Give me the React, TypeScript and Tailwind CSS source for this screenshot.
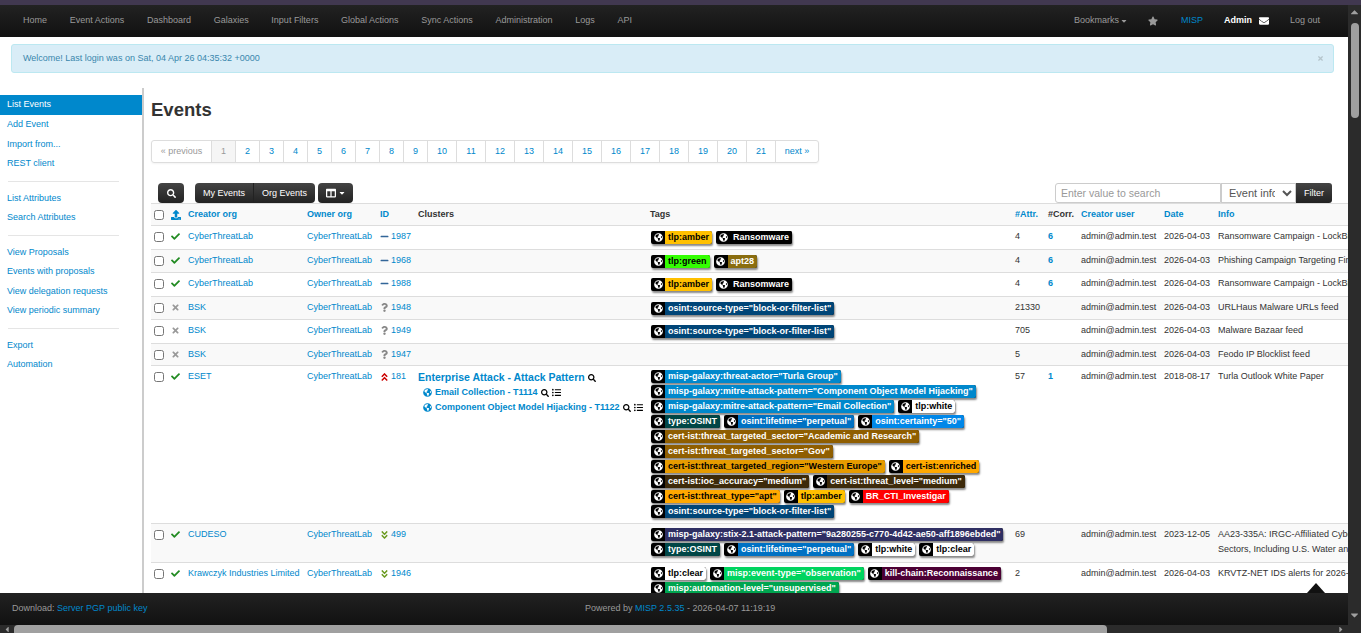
import {
  FaAngleDoubleDown,
  FaAngleDoubleUp,
  FaCheck,
  FaColumns,
  FaEnvelope,
  FaGlobeAmericas,
  FaListUl,
  FaMinus,
  FaQuestion,
  FaSearch,
  FaStar,
  FaTimes,
  FaUpload,
  FaCaretDown,
  FaCaretUp,
  FaCaretLeft,
  FaCaretRight,
} from 'react-icons/fa';

type Tag = { t: string; bg: string; dark?: boolean };

const amber: Tag = { t: 'tlp:amber', bg: 'bg-[#ffc000]', dark: true };
const ransom: Tag = { t: 'Ransomware', bg: 'bg-black' };
const source: Tag = { t: 'osint:source-type="block-or-filter-list"', bg: 'bg-[#004577]' };
const white: Tag = { t: 'tlp:white', bg: 'bg-white', dark: true };
const clear: Tag = { t: 'tlp:clear', bg: 'bg-white', dark: true };
const osintType: Tag = { t: 'type:OSINT', bg: 'bg-[#004646]' };
const lifetime: Tag = { t: 'osint:lifetime="perpetual"', bg: 'bg-[#0071c3]' };

const navLeft = [
  'Home',
  'Event Actions',
  'Dashboard',
  'Galaxies',
  'Input Filters',
  'Global Actions',
  'Sync Actions',
  'Administration',
  'Logs',
  'API',
];

const sideGroups = [
  ['Add Event', 'Import from...', 'REST client'],
  ['List Attributes', 'Search Attributes'],
  ['View Proposals', 'Events with proposals', 'View delegation requests', 'View periodic summary'],
  ['Export', 'Automation'],
];

const pages = Array.from({ length: 21 }, (_, i) => i + 1);

type Row = {
  ok: boolean;
  org: string;
  threat: 'none' | 'unknown' | 'high' | 'low';
  id: string;
  tags: Tag[][];
  attr: string;
  corr?: string;
  date: string;
  info: string;
  info2?: string;
  h: string;
  clusters?: boolean;
};

const rows: Row[] = [
  { ok: true, org: 'CyberThreatLab', threat: 'none', id: '1987', tags: [[amber, ransom]], attr: '4', corr: '6', date: '2026-04-03', info: 'Ransomware Campaign - LockBit 3.0 Healthcare', h: 'h-[24px]' },
  { ok: true, org: 'CyberThreatLab', threat: 'none', id: '1968', tags: [[{ t: 'tlp:green', bg: 'bg-[#33ff00]', dark: true }, { t: 'apt28', bg: 'bg-[#8a6d0f]' }]], attr: '4', corr: '6', date: '2026-04-03', info: 'Phishing Campaign Targeting Finance Sector', h: 'h-[23px]' },
  { ok: true, org: 'CyberThreatLab', threat: 'none', id: '1988', tags: [[amber, ransom]], attr: '4', corr: '6', date: '2026-04-03', info: 'Ransomware Campaign - LockBit 3.0 Healthcare', h: 'h-[24px]' },
  { ok: false, org: 'BSK', threat: 'unknown', id: '1948', tags: [[source]], attr: '21330', date: '2026-04-03', info: 'URLHaus Malware URLs feed', h: 'h-[23px]' },
  { ok: false, org: 'BSK', threat: 'unknown', id: '1949', tags: [[source]], attr: '705', date: '2026-04-03', info: 'Malware Bazaar feed', h: 'h-[24px]' },
  { ok: false, org: 'BSK', threat: 'unknown', id: '1947', tags: [], attr: '5', date: '2026-04-03', info: 'Feodo IP Blocklist feed', h: 'h-[22px]' },
  {
    ok: true,
    org: 'ESET',
    threat: 'high',
    id: '181',
    clusters: true,
    tags: [
      [{ t: 'misp-galaxy:threat-actor="Turla Group"', bg: 'bg-[#0088cc]' }],
      [{ t: 'misp-galaxy:mitre-attack-pattern="Component Object Model Hijacking"', bg: 'bg-[#0088cc]' }],
      [{ t: 'misp-galaxy:mitre-attack-pattern="Email Collection"', bg: 'bg-[#0088cc]' }, white],
      [osintType, lifetime, { t: 'osint:certainty="50"', bg: 'bg-[#0087e8]' }],
      [{ t: 'cert-ist:threat_targeted_sector="Academic and Research"', bg: 'bg-[#8f5e00]' }],
      [{ t: 'cert-ist:threat_targeted_sector="Gov"', bg: 'bg-[#8f5e00]' }],
      [{ t: 'cert-ist:threat_targeted_region="Western Europe"', bg: 'bg-[#e69b00]', dark: true }, { t: 'cert-ist:enriched', bg: 'bg-[#ffa800]', dark: true }],
      [{ t: 'cert-ist:ioc_accuracy="medium"', bg: 'bg-[#3d2a0a]' }, { t: 'cert-ist:threat_level="medium"', bg: 'bg-[#3d2a0a]' }],
      [{ t: 'cert-ist:threat_type="apt"', bg: 'bg-[#ffa800]', dark: true }, amber, { t: 'BR_CTI_Investigar', bg: 'bg-[#ff0000]' }],
      [source],
    ],
    attr: '57',
    corr: '1',
    date: '2018-08-17',
    info: 'Turla Outlook White Paper',
    h: 'h-[158px]',
  },
  {
    ok: true,
    org: 'CUDESO',
    threat: 'low',
    id: '499',
    tags: [
      [{ t: 'misp-galaxy:stix-2.1-attack-pattern="9a280255-c770-4d42-ae50-aff1896ebded"', bg: 'bg-[#2f2f63]' }],
      [osintType, lifetime, white, clear],
    ],
    attr: '69',
    date: '2023-12-05',
    info: 'AA23-335A: IRGC-Affiliated Cyber Actors Exploit PLCs in Multiple',
    info2: 'Sectors, Including U.S. Water and Wastewater Systems',
    h: 'h-[39px]',
  },
  {
    ok: true,
    org: 'Krawczyk Industries Limited',
    threat: 'low',
    id: '1946',
    tags: [
      [clear, { t: 'misp:event-type="observation"', bg: 'bg-[#00d45f]' }, { t: 'kill-chain:Reconnaissance', bg: 'bg-[#4c0035]' }],
      [{ t: 'misp:automation-level="unsupervised"', bg: 'bg-[#00a550]' }],
    ],
    attr: '2',
    date: '2026-04-03',
    info: 'KRVTZ-NET IDS alerts for 2026-04-03',
    h: 'h-[39px]',
  },
];

const TagPill = ({ tag }: { tag: Tag }) => (
  <span className="inline-flex h-[13px] items-center overflow-hidden rounded-[2px] bg-black shadow-[1px_2px_2px_#888] whitespace-nowrap">
    <span className="flex w-[14px] justify-center text-white">
      <FaGlobeAmericas className="text-[9px]" />
    </span>
    <span className={`h-full px-[3px] text-[9px] font-bold leading-[13px] ${tag.bg} ${tag.dark ? 'text-black' : 'text-white'}`}>
      {tag.t}
    </span>
  </span>
);

const ThreatIcon = ({ level }: { level: Row['threat'] }) => {
  if (level === 'none') return <FaMinus className="w-[9px] text-[9px] text-[#336699]" />;
  if (level === 'unknown') return <FaQuestion className="w-[9px] text-[9px] text-[#888]" />;
  if (level === 'high') return <FaAngleDoubleUp className="w-[9px] text-[10px] text-[#cc0000]" />;
  return <FaAngleDoubleDown className="w-[9px] text-[10px] text-[#6a9a1f]" />;
};

const Checkbox = () => <input type="checkbox" className="m-0 block h-[10px] w-[10px]" />;

const Clusters = () => (
  <div className="pt-[1px] font-bold text-[#0088cc]">
    <div className="flex items-center gap-[3px] text-[10.5px] leading-[15px]">
      Enterprise Attack - Attack Pattern
      <FaSearch className="text-[8px] text-black" />
    </div>
    <div className="ml-[5px] flex items-center gap-[3px] leading-[15px]">
      <FaGlobeAmericas className="text-[9px]" />
      Email Collection - T1114
      <FaSearch className="text-[8px] text-black" />
      <FaListUl className="text-[9px] text-black" />
    </div>
    <div className="ml-[5px] flex items-center gap-[3px] whitespace-nowrap leading-[15px]">
      <FaGlobeAmericas className="text-[9px]" />
      Component Object Model Hijacking - T1122
      <FaSearch className="text-[8px] text-black" />
      <FaListUl className="text-[9px] text-black" />
    </div>
  </div>
);

const App = () => {
  return (
    <div className="flex h-[633px] w-[1361px] flex-col overflow-hidden bg-white font-['Liberation_Sans',Arial,sans-serif] text-[9px] text-[#333]">
      <div className="h-[5px] shrink-0 bg-[#413850]" />
      <div className="flex min-h-0 flex-1">
        <div className="flex min-w-0 flex-1 flex-col">
          <nav className="flex h-[32px] shrink-0 items-center justify-between bg-gradient-to-b from-[#222222] to-[#111111] pl-[23px] text-[#999]">
            <div className="flex gap-[22.7px]">
              {navLeft.map((n) => (
                <span key={n}>{n}</span>
              ))}
            </div>
            <div className="flex items-center pr-[28px]">
              <span className="flex items-center gap-[1px]">
                Bookmarks <FaCaretDown className="text-[8px]" />
              </span>
              <FaStar className="ml-[20px] text-[10px]" />
              <span className="ml-[23px] text-[#0088cc]">MISP</span>
              <span className="ml-[21px] font-bold text-white">Admin</span>
              <FaEnvelope className="ml-[7px] text-[10px] text-white" />
              <span className="ml-[21px]">Log out</span>
            </div>
          </nav>

          <div className="flex min-h-0 flex-1 flex-col overflow-hidden">
            <div className="mt-[7px] mr-[14px] ml-[11px] flex h-[29px] shrink-0 items-center justify-between rounded-[3px] border border-[#bce8f1] bg-[#d9edf7] pr-[9px] pl-[11px] text-[#3a87ad]">
              <span>Welcome! Last login was on Sat, 04 Apr 26 04:35:32 +0000</span>
              <FaTimes className="text-[7px] text-[#b5c5cc]" />
            </div>

            <div className="mt-[15px] flex min-h-0 flex-1">
              <aside className="w-[144px] shrink-0 border-r-2 border-[#cccccc] pt-[7px] text-[#0088cc]">
                <div className="flex h-[20px] items-center bg-[#0088cc] pl-[7px] text-white">List Events</div>
                {sideGroups.map((g, i) => (
                  <div key={i}>
                    {g.map((s) => (
                      <div key={s} className="flex h-[19.5px] items-center pl-[7px]">
                        {s}
                      </div>
                    ))}
                    {i < sideGroups.length - 1 && <div className="my-[7px] ml-[8px] h-px w-[111px] bg-[#e5e5e5]" />}
                  </div>
                ))}
              </aside>

              <main className="min-w-0 flex-1 overflow-hidden pl-[7px]">
                <h1 className="mt-[10px] text-[18.5px] leading-[24px] font-bold text-[#333]">Events</h1>

                <div className="mt-[18px] flex h-[23px] w-[668px] rounded-[3px] border border-[#dddddd] text-[#0088cc] shadow-[0_1px_2px_rgba(0,0,0,0.05)]">
                  <span className="flex w-[59px] items-center justify-center text-[#999]">« previous</span>
                  {pages.map((p) => (
                    <span
                      key={p}
                      className={`flex items-center justify-center border-l border-[#dddddd] ${p < 10 ? 'w-[24px]' : 'w-[29px]'} ${p === 1 ? 'bg-[#f5f5f5] text-[#999]' : ''}`}
                    >
                      {p}
                    </span>
                  ))}
                  <span className="flex flex-1 items-center justify-center border-l border-[#dddddd]">next »</span>
                </div>

                <div className="mt-[20px] flex h-[20px] justify-between pr-[16px] pl-[7px]">
                  <div className="flex text-white">
                    <span className="flex w-[26px] items-center justify-center rounded-[4px] bg-gradient-to-b from-[#444444] to-[#222222]">
                      <FaSearch className="text-[9px]" />
                    </span>
                    <span className="ml-[11px] flex items-center rounded-[4px] bg-gradient-to-b from-[#444444] to-[#222222]">
                      <span className="flex h-full w-[59px] items-center justify-center border-r border-[#222] pt-[1px]">My Events</span>
                      <span className="flex h-full w-[61px] items-center justify-center pt-[1px]">Org Events</span>
                    </span>
                    <span className="ml-[3px] flex w-[35px] items-center justify-center gap-[2px] rounded-[4px] bg-gradient-to-b from-[#444444] to-[#222222]">
                      <FaColumns className="text-[10px]" />
                      <FaCaretDown className="text-[8px]" />
                    </span>
                  </div>
                  <div className="flex">
                    <input
                      placeholder="Enter value to search"
                      className="w-[166px] rounded-l-[3px] border border-[#cccccc] px-[5px] pt-[1px] text-[10.5px] placeholder:text-[#999] outline-none"
                    />
                    <select className="w-[75px] border border-[#cccccc] bg-white pr-[4px] pl-[3px] text-[11px] text-[#555]">
                      <option>Event info</option>
                    </select>
                    <span className="flex w-[36px] items-center justify-center rounded-r-[3px] bg-gradient-to-b from-[#444444] to-[#222222] pt-[1px] text-white">
                      Filter
                    </span>
                  </div>
                </div>

                <table className="w-[1365px] table-fixed border-collapse border-t border-[#dddddd] text-left text-[#333]">
                  <colgroup>
                    <col className="w-[18px]" />
                    <col className="w-[17px]" />
                    <col className="w-[119px]" />
                    <col className="w-[73px]" />
                    <col className="w-[38px]" />
                    <col className="w-[232px]" />
                    <col className="w-[365px]" />
                    <col className="w-[33px]" />
                    <col className="w-[33px]" />
                    <col className="w-[83px]" />
                    <col className="w-[54px]" />
                    <col className="w-[300px]" />
                  </colgroup>
                  <thead>
                    <tr className="h-[22px] border-b border-[#dddddd] bg-[#f9f9f9] text-[#0088cc]">
                      <th className="pl-[3px] font-normal"><Checkbox /></th>
                      <th className="pl-[2px]"><FaUpload className="text-[10px] text-[#0088cc]" /></th>
                      <th className="pl-[2px] font-bold">Creator org</th>
                      <th className="pl-[2px] font-bold">Owner org</th>
                      <th className="pl-[2px] font-bold">ID</th>
                      <th className="pl-[2px] font-bold text-[#333]">Clusters</th>
                      <th className="pl-[2px] font-bold text-[#333]">Tags</th>
                      <th className="pl-[2px] font-bold">#Attr.</th>
                      <th className="pl-[2px] font-bold text-[#333]">#Corr.</th>
                      <th className="pl-[2px] font-bold">Creator user</th>
                      <th className="pl-[2px] font-bold">Date</th>
                      <th className="pl-[2px] font-bold">Info</th>
                    </tr>
                  </thead>
                  <tbody>
                    {rows.map((r, i) => (
                      <tr key={r.id} className={`${r.h} border-b border-[#dddddd] align-top ${i % 2 === 1 ? 'bg-[#f9f9f9]' : 'bg-white'}`}>
                        <td className="pt-[6px] pl-[3px]"><Checkbox /></td>
                        <td className="pt-[6px] pl-[2px]">
                          {r.ok ? <FaCheck className="text-[9px] text-[#228b22]" /> : <FaTimes className="text-[9px] text-[#999]" />}
                        </td>
                        <td className="pt-[3px] pl-[2px] leading-[15px] whitespace-nowrap text-[#0088cc]">{r.org}</td>
                        <td className="pt-[3px] pl-[2px] leading-[15px] text-[#0088cc]">CyberThreatLab</td>
                        <td className="pt-[3px] pl-[2px] leading-[15px] text-[#0088cc]">
                          <span className="flex h-[15px] items-center gap-[2px]">
                            <ThreatIcon level={r.threat} />
                            {r.id}
                          </span>
                        </td>
                        <td className="pt-[3px] pl-[2px]">{r.clusters && <Clusters />}</td>
                        <td className={`pl-[3px] ${r.tags.length === 1 ? 'pt-[5px]' : 'pt-[4px]'}`}>
                          {r.tags.map((line, j) => (
                            <div key={j} className="flex h-[15px] gap-[4px]">
                              {line.map((t, k) => (
                                <TagPill key={k} tag={t} />
                              ))}
                            </div>
                          ))}
                        </td>
                        <td className="pt-[3px] pl-[2px] leading-[15px]">{r.attr}</td>
                        <td className="pt-[3px] pl-[2px] leading-[15px] font-bold text-[#0088cc]">{r.corr}</td>
                        <td className="pt-[3px] pl-[2px] leading-[15px]">admin@admin.test</td>
                        <td className="pt-[3px] pl-[2px] leading-[15px]">{r.date}</td>
                        <td className="pt-[3px] pl-[2px] leading-[15px] whitespace-nowrap">
                          {r.info}
                          {r.info2 && <div>{r.info2}</div>}
                        </td>
                      </tr>
                    ))}
                  </tbody>
                </table>
              </main>
            </div>
          </div>

          <footer className="relative flex h-[32px] shrink-0 items-center justify-between bg-gradient-to-b from-[#222222] to-[#111111] px-[12px] text-[#999]">
            <span>
              Download: <span className="text-[#0088cc]">Server PGP public key</span>
            </span>
            <span className="absolute left-[585px]">
              Powered by <span className="text-[#0088cc]">MISP 2.5.35</span> - 2026-04-07 11:19:19
            </span>
            <span className="absolute -top-[10px] left-[1307px] h-0 w-0 border-x-[9px] border-b-[10px] border-x-transparent border-b-[#111]" />
          </footer>

          <div className="flex h-[8px] shrink-0 items-center bg-[#2b2b2b] text-[#a0a0a0]">
            <FaCaretLeft className="w-[14px] text-[9px]" />
            <div className="h-full w-[1093px] rounded-t-[4px] bg-[#a0a0a0]" />
            <FaCaretRight className="ml-auto w-[14px] text-[9px]" />
          </div>
        </div>

        <div className="flex w-[13px] shrink-0 flex-col items-center bg-[#2b2b2b] text-[#a0a0a0]">
          <FaCaretUp className="mt-[1px] h-[12px] text-[11px]" />
          <div className="mt-[5px] h-[95px] w-[8px] rounded-[4px] bg-[#a0a0a0]" />
          <FaCaretDown className="mt-auto mb-[12px] h-[12px] text-[11px]" />
        </div>
      </div>
    </div>
  );
};

export default App;
